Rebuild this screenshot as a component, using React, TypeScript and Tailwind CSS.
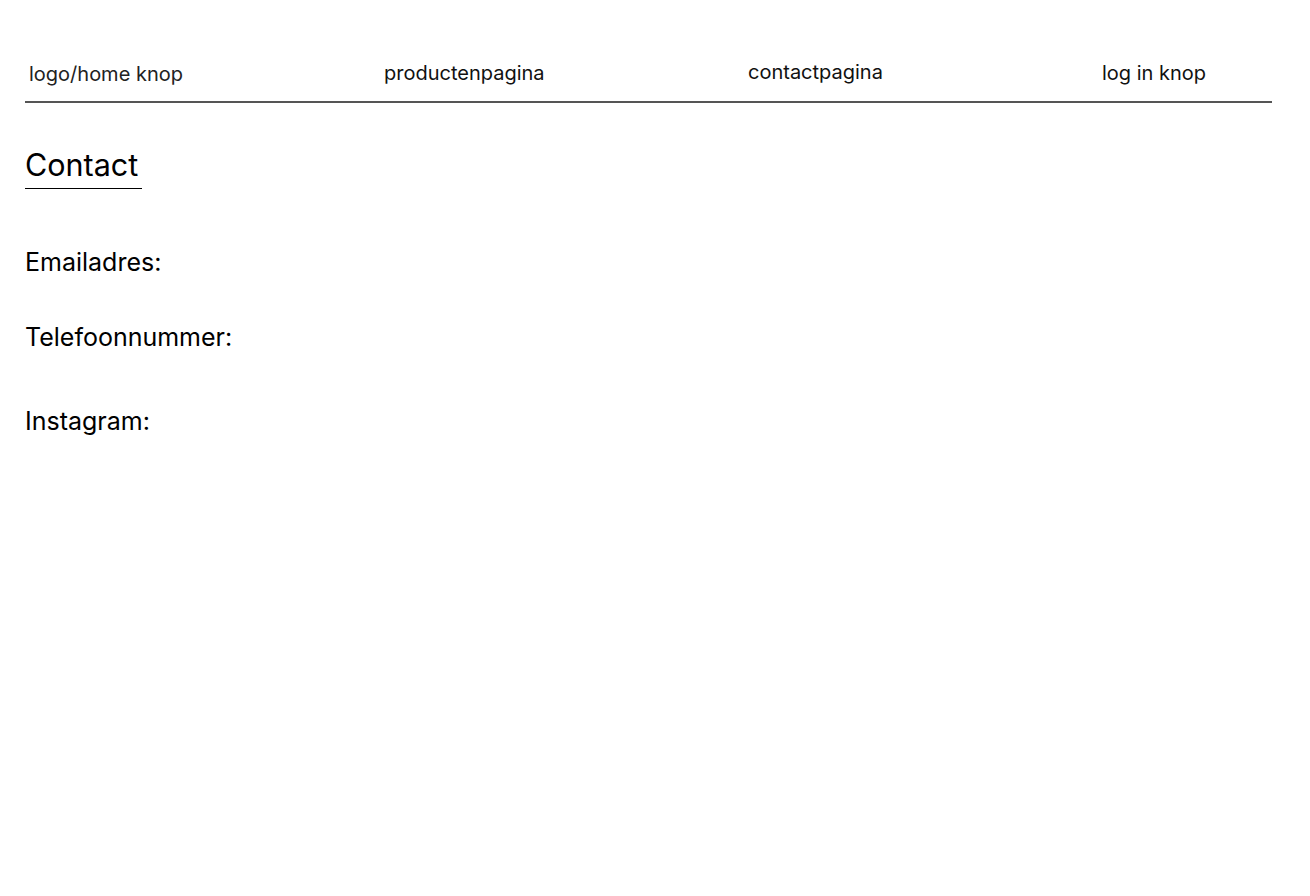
export default function App() {
  return (
    <div className="min-h-[896px] w-[1310px] bg-white text-black" style={{ fontFamily: "Inter, 'Noto Sans', sans-serif" }}>
      <div className="pl-[25px] pr-[38px] pt-[60px]">
        <nav className="flex items-start border-b-2 border-[#555] pb-[15px] text-[20px] leading-[24px]">
          <div className="w-[359px] pl-[4px] pt-[2px] text-[#222]">logo/home knop</div>
          <div className="w-[364px] pt-[1px] text-[#111]">productenpagina</div>
          <div className="w-[354px] text-[#111]">contactpagina</div>
          <div className="pt-[1px] text-[#111]">log in knop</div>
        </nav>
      </div>
      <div className="pl-[25px] pt-[42px]">
        <h1 className="inline-block border-b border-black pb-[3px] pr-[4px] text-[30.5px] font-normal leading-[40px]">Contact</h1>
        <div className="mt-[58px] text-[25px] leading-[30px]">Emailadres:</div>
        <div className="mt-[45px] text-[25px] leading-[30px]">Telefoonnummer:</div>
        <div className="mt-[54px] text-[25px] leading-[30px]">Instagram:</div>
      </div>
    </div>
  );
}
